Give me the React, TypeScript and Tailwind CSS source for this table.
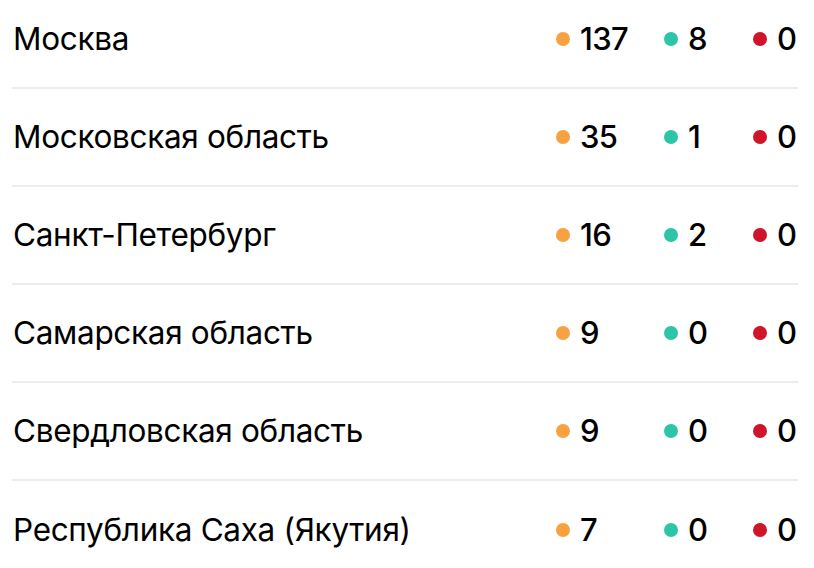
import React from 'react';

const ROWS = [
  { name: 'Москва', cases: 137, recovered: 8, deaths: 0 },
  { name: 'Московская область', cases: 35, recovered: 1, deaths: 0 },
  { name: 'Санкт-Петербург', cases: 16, recovered: 2, deaths: 0 },
  { name: 'Самарская область', cases: 9, recovered: 0, deaths: 0 },
  { name: 'Свердловская область', cases: 9, recovered: 0, deaths: 0 },
  { name: 'Республика Саха (Якутия)', cases: 7, recovered: 0, deaths: 0 },
];

const Stat: React.FC<{ color: string; value: number; width: string }> = ({ color, value, width }) => (
  <div className={`flex items-center ${width}`}>
    <span className={`w-[14px] h-[14px] rounded-full shrink-0 ${color}`} />
    <span className="ml-[10px] text-[31px] font-medium tracking-[-0.02em]">{value}</span>
  </div>
);

export default function App() {
  return (
    <div className="w-[814px] h-[568px] overflow-hidden bg-white text-black" style={{ fontFamily: 'Inter, "Noto Sans", sans-serif' }}>
      <div className="-mt-[9px] pl-[12px] pr-[16px]">
        {ROWS.map((row, i) => (
          <div
            key={row.name}
            className={`h-[98px] flex items-center ${i < ROWS.length - 1 ? 'border-b-2 border-[#ececec]' : ''}`}
          >
            <div className="flex-1 pl-px text-[31.5px] tracking-[-0.01em]">{row.name}</div>
            <Stat color="bg-[#f7a140]" value={row.cases} width="w-[108px]" />
            <Stat color="bg-[#2cc6a7]" value={row.recovered} width="w-[89px]" />
            <Stat color="bg-[#d0142a]" value={row.deaths} width="w-[45px]" />
          </div>
        ))}
      </div>
    </div>
  );
}
